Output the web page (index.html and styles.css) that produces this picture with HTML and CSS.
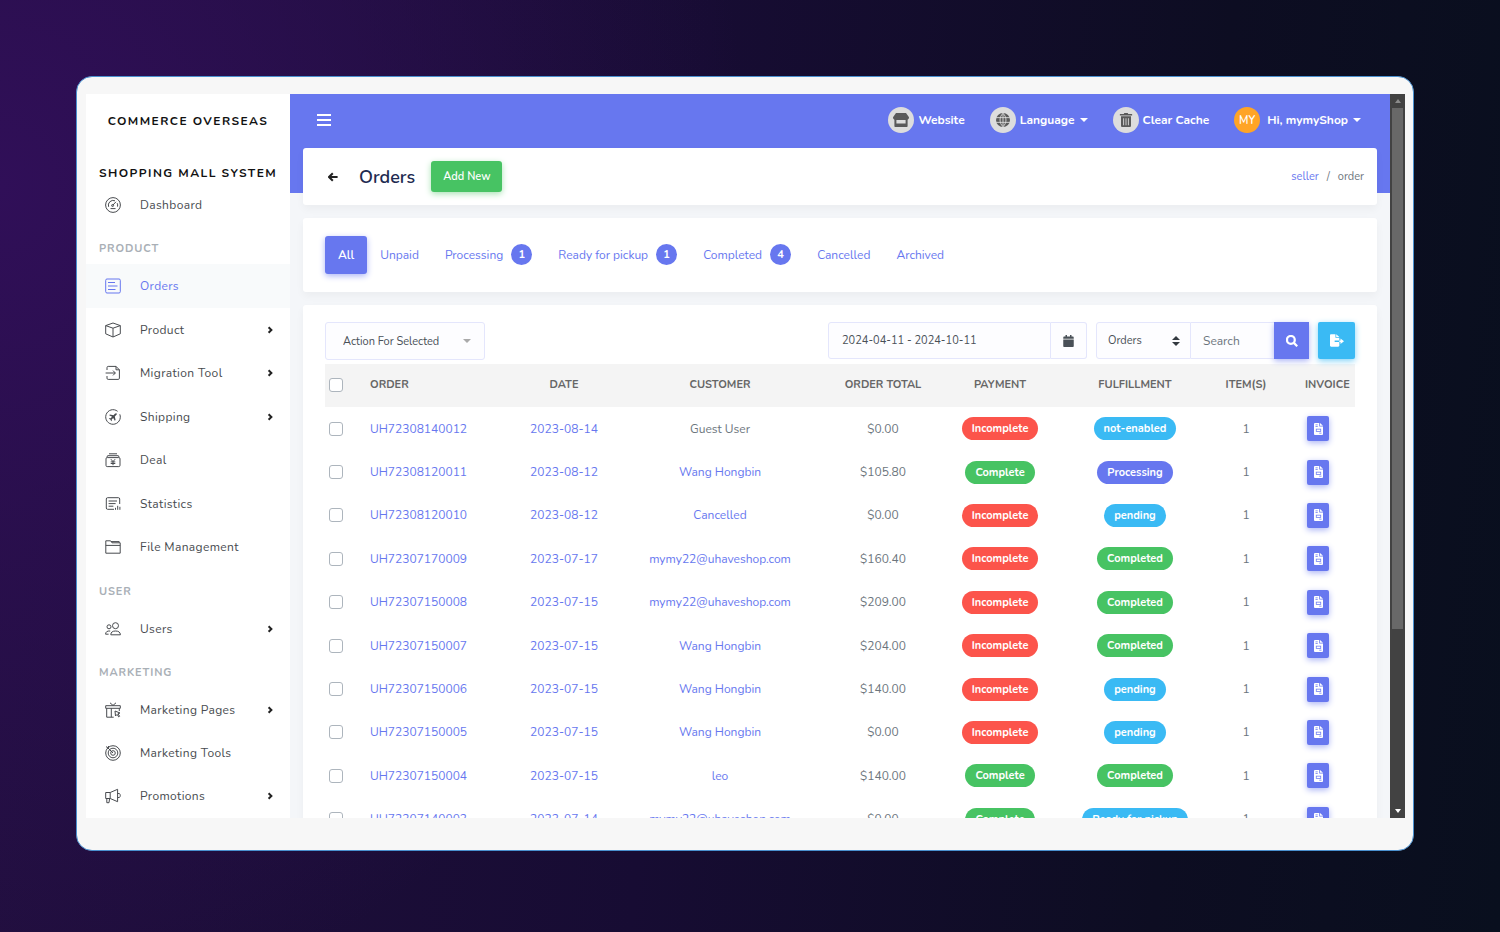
FILE: index.html
```html
<!DOCTYPE html>
<html lang="en">
<head>
    <meta charset="UTF-8">
    <meta name="viewport" content="width=device-width, initial-scale=1.0">
    <title>Orders</title>
    <link rel="stylesheet" href="styles.css">
</head>
<body>
    <!-- icon set -->
    <svg class="sprite" aria-hidden="true">
        <symbol id="i-dashboard" viewBox="0 0 16 16"><circle cx="8" cy="8" r="7.4"/><path d="M3.6 9.8A4.8 4.8 0 0 1 10 3.8M12.2 6.2a4.8 4.8 0 0 1 .3 3.4M7.6 8.4l3.4-3.6M5.5 11.6h5"/><circle cx="7.6" cy="8.5" r="1"/></symbol>
        <symbol id="i-orders" viewBox="0 0 16 16"><rect x=".7" y="1" width="14.6" height="14" rx="1.3"/><path d="M3 4.5h7M3 8h9.500M3 11.500h7.500"/></symbol>
        <symbol id="i-product" viewBox="0 0 16 16"><path d="M8 1l7.3 2.6v8.2L8 15 .7 11.8V3.6zM.7 3.6L8 6.2l7.3-2.6M8 6.2V15"/></symbol>
        <symbol id="i-migration" viewBox="0 0 16 16"><path d="M2 5V2.6C2 1.800 2.500 1.400 3.200 1.400H11l3.400 3.400v8.400c0 .8-.4 1.200-1.200 1.200H3.200c-.8 0-1.200-.4-1.200-1.200V11M11 1.400v3.400h3.400M.6 8h9.600M8 5.600L10.400 8 8 10.400"/></symbol>
        <symbol id="i-shipping" viewBox="0 0 16 16"><path d="M12.600 2.300A7.300 7.300 0 1 0 14.800 5.300"/><path class="solid" d="M11.600 4.400c.5.500.1 1.200-.4 1.700L9.800 7.500l.8 3.600-.8.700-1.600-2.900-1.500 1.500.1 1.300-.6.500-.8-1.600-1.600-.8.500-.6 1.300.1 1.500-1.500-2.900-1.600.7-.8 3.600.8 1.400-1.400c.5-.5 1.200-.9 1.700-.4z"/></symbol>
        <symbol id="i-deal" viewBox="0 0 16 16"><rect x="1" y="5.600" width="14" height="9" rx="1.200"/><path d="M2.600 3.700h10.800M4 1.800h8M1.800 5.400l.8-1.700M14.200 5.400l-.8-1.700M5.900 7.200L8 9.600l2.100-2.400M8 9.600v3.600M5.700 9.900h4.600M5.700 11.500h4.600"/></symbol>
        <symbol id="i-statistics" viewBox="0 0 16 16"><path d="M14.700 8V3c0-.9-.4-1.300-1.300-1.300H2.600c-.9 0-1.300.4-1.300 1.300v9c0 .9.4 1.300 1.300 1.300H9M3.600 5h8.400M3.600 7.600h7M3.600 10.200h4.800M10.500 13.800v-2M12.700 13.800v-4M14.900 13.800v-3"/></symbol>
        <symbol id="i-files" viewBox="0 0 16 16"><path d="M.8 14.200V1.800h4.800l1.400 2h8.200v10.400zM.8 6.400h14.400M6 2.600h8.200v1"/></symbol>
        <symbol id="i-users" viewBox="0 0 16 16"><circle cx="10.500" cy="4.700" r="3"/><circle cx="4" cy="5.800" r="2"/><path d="M5.800 13.800c0-2.800 2-3.800 4.700-3.800s4.900 1 4.900 3.800zM5.200 10C2.200 9.700.6 10.900.6 13.200h3"/></symbol>
        <symbol id="i-pages" viewBox="0 0 16 16"><path d="M.7 3.700h14.600v2.600H.7zM1.700 6.300v8.900h7M6.300 6.300v8.900M14.300 6.300V9M5 .8l3 2.600 3-2.600M10 9l5 2-2 .8 1.600 2.500-.9.600-1.600-2.500L10.500 14z"/></symbol>
        <symbol id="i-tools" viewBox="0 0 16 16"><circle cx="8" cy="8" r="7.300"/><circle cx="8" cy="8" r="4.800"/><circle cx="8" cy="8" r="2.300"/><path d="M8 8L3 3M1 1.600l2 1.400.6-2"/></symbol>
        <symbol id="i-promo" viewBox="0 0 16 16"><path d="M.7 4.500h4.500L12.600 1.300v12.400L5.200 10.500H.7zM5.200 4.500v6M1.800 10.500v4.200H4l.6-4.200M12.600 5.500h1.800c1.200 1.200 1.200 2.800 0 4h-1.800"/></symbol>
        <symbol id="i-chevron" viewBox="0 0 8 8"><path d="M2.600 1.200L5.400 4 2.600 6.800"/></symbol>
        <symbol id="i-store" viewBox="0 0 16 14"><path fill-rule="evenodd" d="M3 0h10l3 4.200c0 1.300-.6 2.100-1.400 2.500V13c0 .6-.4 1-1 1H2.400c-.6 0-1-.4-1-1V6.700C.6 6.300 0 5.500 0 4.200zM3.400 7v3.500h9.200V7z"/></symbol>
        <symbol id="i-globe" viewBox="0 0 16 16"><circle cx="8" cy="8" r="8"/><path class="grid" d="M0 5.300h16M0 10.700h16M8 0v16M8 .5C3.500 4 3.500 12 8 15.500M8 .5c4.500 3.500 4.500 11.500 0 15"/></symbol>
        <symbol id="i-trash" viewBox="0 0 14 16"><path fill-rule="evenodd" d="M4.500 1L5 0h4l.5 1H14v1.800H0V1zM1.300 3.800h11.400V14.500c0 .9-.6 1.500-1.500 1.500H2.800c-.9 0-1.500-.6-1.500-1.500zM3.800 6v8h1V6zM6.500 6v8h1V6zM9.200 6v8h1V6z"/></symbol>
        <symbol id="i-calendar" viewBox="0 0 14 16"><path d="M3 0h2v2h4V0h2v2h1.500c.9 0 1.500.6 1.500 1.500V5H0V3.500C0 2.600.6 2 1.500 2H3zM0 6h14v8.500c0 .9-.6 1.500-1.500 1.500h-11C.6 16 0 15.400 0 14.500z"/></symbol>
        <symbol id="i-search" viewBox="0 0 16 16"><path class="line" d="M10.500 10.500L15 15"/><circle class="line" cx="6.500" cy="6.500" r="5.200"/></symbol>
        <symbol id="i-export" viewBox="0 0 18 16"><path d="M0 1.500C0 .6.6 0 1.500 0H7v4.500h5V8H6v2h6v4.500c0 .9-.6 1.500-1.500 1.500h-9C.6 16 0 15.400 0 14.500zM8 0l4 3.500H8zM13.500 5.500l4.500 3.500-4.500 3.500V10H12V8h1.500z"/></symbol>
        <symbol id="i-invoice" viewBox="0 0 12 16"><path fill-rule="evenodd" d="M0 1.200C0 .5.500 0 1.200 0H7v4.500h5v10.300c0 .7-.5 1.200-1.200 1.200H1.200C.5 16 0 15.500 0 14.800zM8 0l4 3.500H8zM2 2v1h3V2zM2 4v1h3V4zM2.500 7.500v4h7v-4zM3.500 8.500h5v2h-5zM7 13v1h3v-1z"/></symbol>
        <symbol id="i-back" viewBox="0 0 10 10"><path d="M9.600 5H1M4.800 1.200L1 5l3.800 3.800"/></symbol>
    </svg>

    <div class="window">
        <div class="screen">
            <aside class="sidebar">
                <a class="brand" href="#">Commerce Overseas</a>
                <nav>
                    <h2 class="system-name">Shopping Mall System</h2>
                    <ul class="menu">
                        <li><a href="#"><svg class="menu-icon"><use href="#i-dashboard"/></svg>Dashboard</a></li>
                    </ul>
                    <h3 class="menu-header">Product</h3>
                    <ul class="menu menu-product">
                        <li class="active"><a href="#"><svg class="menu-icon"><use href="#i-orders"/></svg>Orders</a></li>
                        <li><a href="#"><svg class="menu-icon"><use href="#i-product"/></svg>Product<svg class="chevron"><use href="#i-chevron"/></svg></a></li>
                        <li><a href="#"><svg class="menu-icon"><use href="#i-migration"/></svg>Migration Tool<svg class="chevron"><use href="#i-chevron"/></svg></a></li>
                        <li><a href="#"><svg class="menu-icon"><use href="#i-shipping"/></svg>Shipping<svg class="chevron"><use href="#i-chevron"/></svg></a></li>
                        <li><a href="#"><svg class="menu-icon"><use href="#i-deal"/></svg>Deal</a></li>
                        <li><a href="#"><svg class="menu-icon"><use href="#i-statistics"/></svg>Statistics</a></li>
                        <li><a href="#"><svg class="menu-icon"><use href="#i-files"/></svg>File Management</a></li>
                    </ul>
                    <h3 class="menu-header">User</h3>
                    <ul class="menu">
                        <li><a href="#"><svg class="menu-icon"><use href="#i-users"/></svg>Users<svg class="chevron"><use href="#i-chevron"/></svg></a></li>
                    </ul>
                    <h3 class="menu-header">Marketing</h3>
                    <ul class="menu">
                        <li><a href="#"><svg class="menu-icon"><use href="#i-pages"/></svg>Marketing Pages<svg class="chevron"><use href="#i-chevron"/></svg></a></li>
                        <li><a href="#"><svg class="menu-icon"><use href="#i-tools"/></svg>Marketing Tools</a></li>
                        <li><a href="#"><svg class="menu-icon"><use href="#i-promo"/></svg>Promotions<svg class="chevron"><use href="#i-chevron"/></svg></a></li>
                    </ul>
                </nav>
            </aside>

            <main class="main">
                <header class="topbar">
                    <button class="hamburger" type="button" aria-label="Toggle menu"><span></span><span></span><span></span></button>
                    <a class="top-link" href="#"><span class="circle"><svg class="top-icon"><use href="#i-store"/></svg></span>Website</a>
                    <a class="top-link" href="#"><span class="circle"><svg class="top-icon"><use href="#i-globe"/></svg></span>Language<i class="caret"></i></a>
                    <a class="top-link" href="#"><span class="circle"><svg class="top-icon"><use href="#i-trash"/></svg></span>Clear Cache</a>
                    <a class="top-link" href="#"><span class="circle avatar">MY</span>Hi, mymyShop<i class="caret"></i></a>
                </header>

                <section class="card page-header">
                    <a class="back" href="#" aria-label="Back"><svg><use href="#i-back"/></svg></a>
                    <h1>Orders</h1>
                    <button class="btn-add" type="button">Add New</button>
                    <div class="breadcrumb"><a href="#">seller</a><span>/</span><span>order</span></div>
                </section>

                <section class="card tabs">
                    <a class="tab selected" href="#">All</a>
                    <a class="tab" href="#">Unpaid</a>
                    <a class="tab" href="#">Processing<span class="count">1</span></a>
                    <a class="tab" href="#">Ready for pickup<span class="count">1</span></a>
                    <a class="tab" href="#">Completed<span class="count">4</span></a>
                    <a class="tab" href="#">Cancelled</a>
                    <a class="tab" href="#">Archived</a>
                </section>

                <section class="card orders">
                    <form class="toolbar">
                        <select class="action" aria-label="Action for selected"><option>Action For Selected</option></select>
                        <div class="group">
                            <input class="range" type="text" value="2024-04-11 - 2024-10-11" aria-label="Date range">
                            <button class="calendar" type="button" aria-label="Open calendar"><svg><use href="#i-calendar"/></svg></button>
                        </div>
                        <div class="group">
                            <select class="scope" aria-label="Search in"><option>Orders</option></select>
                            <input class="search" type="text" placeholder="Search" aria-label="Search">
                            <button class="btn-search" type="button" aria-label="Search"><svg><use href="#i-search"/></svg></button>
                        </div>
                        <button class="btn-export" type="button" aria-label="Export"><svg><use href="#i-export"/></svg></button>
                    </form>

                    <table>
                        <thead>
                            <tr>
                                <th class="c-check"><input type="checkbox" aria-label="Select all"></th>
                                <th class="c-order">Order</th>
                                <th class="c-date">Date</th>
                                <th class="c-customer">Customer</th>
                                <th class="c-total">Order Total</th>
                                <th class="c-payment">Payment</th>
                                <th class="c-fulfillment">Fulfillment</th>
                                <th class="c-items">Item(s)</th>
                                <th class="c-invoice">Invoice</th>
                            </tr>
                        </thead>
                        <tbody>
                            <tr>
                                <td><input type="checkbox" aria-label="Select UH72308140012"></td>
                                <td class="c-order"><a href="#">UH72308140012</a></td>
                                <td><a href="#">2023-08-14</a></td>
                                <td>Guest User</td>
                                <td>$0.00</td>
                                <td><span class="badge danger">Incomplete</span></td>
                                <td><span class="badge info">not-enabled</span></td>
                                <td>1</td>
                                <td class="c-invoice"><button class="btn-invoice" type="button" aria-label="Invoice"><svg><use href="#i-invoice"/></svg></button></td>
                            </tr>
                            <tr>
                                <td><input type="checkbox" aria-label="Select UH72308120011"></td>
                                <td class="c-order"><a href="#">UH72308120011</a></td>
                                <td><a href="#">2023-08-12</a></td>
                                <td><a href="#">Wang Hongbin</a></td>
                                <td>$105.80</td>
                                <td><span class="badge success">Complete</span></td>
                                <td><span class="badge primary">Processing</span></td>
                                <td>1</td>
                                <td class="c-invoice"><button class="btn-invoice" type="button" aria-label="Invoice"><svg><use href="#i-invoice"/></svg></button></td>
                            </tr>
                            <tr>
                                <td><input type="checkbox" aria-label="Select UH72308120010"></td>
                                <td class="c-order"><a href="#">UH72308120010</a></td>
                                <td><a href="#">2023-08-12</a></td>
                                <td><a href="#">Cancelled</a></td>
                                <td>$0.00</td>
                                <td><span class="badge danger">Incomplete</span></td>
                                <td><span class="badge info">pending</span></td>
                                <td>1</td>
                                <td class="c-invoice"><button class="btn-invoice" type="button" aria-label="Invoice"><svg><use href="#i-invoice"/></svg></button></td>
                            </tr>
                            <tr>
                                <td><input type="checkbox" aria-label="Select UH72307170009"></td>
                                <td class="c-order"><a href="#">UH72307170009</a></td>
                                <td><a href="#">2023-07-17</a></td>
                                <td><a href="#">mymy22@uhaveshop.com</a></td>
                                <td>$160.40</td>
                                <td><span class="badge danger">Incomplete</span></td>
                                <td><span class="badge success">Completed</span></td>
                                <td>1</td>
                                <td class="c-invoice"><button class="btn-invoice" type="button" aria-label="Invoice"><svg><use href="#i-invoice"/></svg></button></td>
                            </tr>
                            <tr>
                                <td><input type="checkbox" aria-label="Select UH72307150008"></td>
                                <td class="c-order"><a href="#">UH72307150008</a></td>
                                <td><a href="#">2023-07-15</a></td>
                                <td><a href="#">mymy22@uhaveshop.com</a></td>
                                <td>$209.00</td>
                                <td><span class="badge danger">Incomplete</span></td>
                                <td><span class="badge success">Completed</span></td>
                                <td>1</td>
                                <td class="c-invoice"><button class="btn-invoice" type="button" aria-label="Invoice"><svg><use href="#i-invoice"/></svg></button></td>
                            </tr>
                            <tr>
                                <td><input type="checkbox" aria-label="Select UH72307150007"></td>
                                <td class="c-order"><a href="#">UH72307150007</a></td>
                                <td><a href="#">2023-07-15</a></td>
                                <td><a href="#">Wang Hongbin</a></td>
                                <td>$204.00</td>
                                <td><span class="badge danger">Incomplete</span></td>
                                <td><span class="badge success">Completed</span></td>
                                <td>1</td>
                                <td class="c-invoice"><button class="btn-invoice" type="button" aria-label="Invoice"><svg><use href="#i-invoice"/></svg></button></td>
                            </tr>
                            <tr>
                                <td><input type="checkbox" aria-label="Select UH72307150006"></td>
                                <td class="c-order"><a href="#">UH72307150006</a></td>
                                <td><a href="#">2023-07-15</a></td>
                                <td><a href="#">Wang Hongbin</a></td>
                                <td>$140.00</td>
                                <td><span class="badge danger">Incomplete</span></td>
                                <td><span class="badge info">pending</span></td>
                                <td>1</td>
                                <td class="c-invoice"><button class="btn-invoice" type="button" aria-label="Invoice"><svg><use href="#i-invoice"/></svg></button></td>
                            </tr>
                            <tr>
                                <td><input type="checkbox" aria-label="Select UH72307150005"></td>
                                <td class="c-order"><a href="#">UH72307150005</a></td>
                                <td><a href="#">2023-07-15</a></td>
                                <td><a href="#">Wang Hongbin</a></td>
                                <td>$0.00</td>
                                <td><span class="badge danger">Incomplete</span></td>
                                <td><span class="badge info">pending</span></td>
                                <td>1</td>
                                <td class="c-invoice"><button class="btn-invoice" type="button" aria-label="Invoice"><svg><use href="#i-invoice"/></svg></button></td>
                            </tr>
                            <tr>
                                <td><input type="checkbox" aria-label="Select UH72307150004"></td>
                                <td class="c-order"><a href="#">UH72307150004</a></td>
                                <td><a href="#">2023-07-15</a></td>
                                <td><a href="#">leo</a></td>
                                <td>$140.00</td>
                                <td><span class="badge success">Complete</span></td>
                                <td><span class="badge success">Completed</span></td>
                                <td>1</td>
                                <td class="c-invoice"><button class="btn-invoice" type="button" aria-label="Invoice"><svg><use href="#i-invoice"/></svg></button></td>
                            </tr>
                            <tr>
                                <td><input type="checkbox" aria-label="Select UH72307140003"></td>
                                <td class="c-order"><a href="#">UH72307140003</a></td>
                                <td><a href="#">2023-07-14</a></td>
                                <td><a href="#">mymy22@uhaveshop.com</a></td>
                                <td>$0.00</td>
                                <td><span class="badge success">Complete</span></td>
                                <td><span class="badge info">Ready for pickup</span></td>
                                <td>1</td>
                                <td class="c-invoice"><button class="btn-invoice" type="button" aria-label="Invoice"><svg><use href="#i-invoice"/></svg></button></td>
                            </tr>
                        </tbody>
                    </table>
                </section>
            </main>

            <div class="scrollbar">
                <span class="arrow up"></span>
                <span class="thumb"></span>
                <span class="arrow down"></span>
            </div>
        </div>
    </div>
</body>
</html>
```
FILE: styles.css
```css
* {
    box-sizing: border-box;
}
body {
    margin: 0;
    height: 100vh;
    padding: 76px 86px 81px 76px;
    font-family: Nunito, "Open Sans", sans-serif;
    font-size: 12px;
    color: #6c757d;
    background:
        radial-gradient(ellipse 50% 90% at 0% 20%, #300f58, rgba(48, 15, 88, 0)),
        linear-gradient(95deg, #210f3e 0%, #170c33 45%, #0d0d22 78%, #090f1e 100%);
}
a {
    color: #6777ef;
    text-decoration: none;
}
button,
input,
select {
    font-family: inherit;
    font-size: 11px;
}
button {
    padding: 0;
    border: none;
    cursor: pointer;
}
h1, h2, h3, ul {
    margin: 0;
    padding: 0;
}
svg {
    display: block;
    fill: currentColor;
}
.sprite {
    position: absolute;
    width: 0;
    height: 0;
}
.window {
    height: 100%;
    padding: 17px 8px 32px 9px;
    background: #f7f7f7;
    border: 1px solid #4a90cf;
    border-radius: 16px;
}
.screen {
    display: flex;
    height: 100%;
    overflow: hidden;
    background: #f4f6f9;
}

/* sidebar */
.sidebar {
    flex: 0 0 204px;
    background: #fff;
    box-shadow: 0 4px 8px rgba(0, 0, 0, 0.04);
}
.brand,
.system-name {
    font-size: 12px;
    font-weight: 700;
    letter-spacing: 0.12em;
    text-transform: uppercase;
    white-space: nowrap;
    color: #111;
}
.brand {
    display: block;
    line-height: 54px;
    text-align: center;
}
.system-name {
    padding: 15px 0 0 13px;
    line-height: 20px;
}
.menu {
    list-style: none;
}
.menu-product {
    display: flex;
    flex-direction: column;
    height: 305px;
}
.menu-product li {
    flex: 1;
}
.menu a {
    display: flex;
    align-items: center;
    height: 43px;
    padding: 0 16px 0 19px;
    letter-spacing: 0.03em;
    color: #484b4f;
}
.menu .active a {
    height: 44px;
    color: #6777ef;
    background: #f8fafb;
}
.menu-header {
    padding: 10px 13px 2px;
    font-size: 11px;
    line-height: 26px;
    font-weight: 700;
    letter-spacing: 0.08em;
    text-transform: uppercase;
    color: #a9afb6;
}
.menu-icon {
    width: 16px;
    height: 16px;
    margin-right: 19px;
    fill: none;
    stroke: currentColor;
}
.solid {
    fill: currentColor;
    stroke: none;
}
.chevron {
    width: 8px;
    height: 8px;
    margin-left: auto;
    fill: none;
    stroke: #222;
    stroke-width: 2;
}

/* main column */
.main {
    flex: 1;
    min-width: 0;
    display: flex;
    flex-direction: column;
    gap: 13px;
    padding: 0 13px;
    background: linear-gradient(#6777ef 99px, #f4f6f9 99px);
}
.topbar {
    display: flex;
    align-items: center;
    gap: 25px;
    height: 54px;
    margin-bottom: -13px;
    padding: 0 16px 2px 14px;
    flex-shrink: 0;
}
.hamburger {
    display: flex;
    flex-direction: column;
    gap: 3px;
    width: 14px;
    margin-right: auto;
    background: none;
}
.hamburger span {
    height: 2px;
    background: #fff;
}
.top-link {
    display: flex;
    align-items: center;
    gap: 4px;
    font-weight: 700;
    color: #fff;
}
.circle {
    display: flex;
    align-items: center;
    justify-content: center;
    width: 26px;
    height: 26px;
    border-radius: 50%;
    color: #5a5a5a;
    background: #ddd;
}
.avatar {
    margin-right: 3px;
    font-size: 11px;
    font-weight: 600;
    color: #fff;
    background: #ffa426;
}
.top-icon {
    width: 16px;
    height: 14px;
}
.grid {
    fill: none;
    stroke: #ddd;
    stroke-width: 1;
}
.caret {
    margin-left: 1px;
    border: 4px solid transparent;
    border-top-color: #fff;
    border-bottom: none;
}
.card {
    background: #fff;
    border-radius: 3px;
    box-shadow: 0 4px 8px rgba(0, 0, 0, 0.04);
    flex-shrink: 0;
}
.page-header {
    display: flex;
    align-items: center;
    height: 57px;
    padding: 0 13px 0 25px;
}
.back svg {
    width: 10px;
    height: 10px;
    fill: none;
    stroke: #222;
    stroke-width: 2;
}
h1 {
    margin: 0 16px 0 21px;
    font-size: 18px;
    font-weight: 600;
    color: #212a50;
}
.btn-add {
    height: 31px;
    padding: 0 12px;
    font-weight: 600;
    color: #fff;
    background: #47c363;
    border-radius: 3px;
    box-shadow: 0 2px 6px #a8e2b4;
}
.breadcrumb {
    display: flex;
    gap: 8px;
    margin-left: auto;
    font-size: 11px;
}
.tabs {
    display: flex;
    align-items: center;
    height: 74px;
    padding: 0 22px 1px;
}
.tab {
    display: flex;
    align-items: center;
    gap: 8px;
    height: 38px;
    padding: 0 13px;
}
.tab.selected {
    font-weight: 600;
    color: #fff;
    background: #6777ef;
    border-radius: 3px;
    box-shadow: 0 2px 6px #acb5f6;
}
.count {
    width: 21px;
    line-height: 21px;
    border-radius: 50%;
    text-align: center;
    font-size: 11px;
    font-weight: 700;
    color: #fff;
    background: #6777ef;
}

/* orders list */
.orders {
    padding: 17px 22px;
}
.toolbar {
    display: flex;
    gap: 9px;
    margin-bottom: 4px;
}
.action,
.scope,
.range,
.search,
.calendar {
    height: 37px;
    color: #495057;
    background-color: #fdfdff;
    border: 1px solid #e4e6fc;
    border-radius: 3px;
}
.action,
.scope {
    appearance: none;
    background-repeat: no-repeat;
}
.action {
    width: 160px;
    height: 38px;
    margin-right: auto;
    padding: 0 17px;
    background-image: url("data:image/svg+xml,%3Csvg xmlns='http://www.w3.org/2000/svg' width='8' height='4'%3E%3Cpath d='M0 0h8L4 4z' fill='%23aaa'/%3E%3C/svg%3E");
    background-position: right 13px center;
}
.group {
    display: flex;
}
.range {
    width: 223px;
    padding: 0 13px;
    border-radius: 3px 0 0 3px;
}
.calendar {
    display: flex;
    align-items: center;
    justify-content: center;
    width: 36px;
    border-left: none;
    border-radius: 0 3px 3px 0;
}
.calendar svg {
    width: 11px;
    height: 12px;
}
.scope {
    width: 95px;
    padding: 0 11px;
    border-radius: 3px 0 0 3px;
    background-image: url("data:image/svg+xml,%3Csvg xmlns='http://www.w3.org/2000/svg' width='8' height='10'%3E%3Cpath d='M0 4h8L4 0zM0 6h8l-4 4z' fill='%23343a40'/%3E%3C/svg%3E");
    background-position: right 10px center;
}
.search {
    width: 83px;
    padding: 0 12px;
    font-size: 12px;
    border-left: none;
    border-right: none;
    border-radius: 0;
}
.search::placeholder {
    color: #6c757d;
}
.btn-search,
.btn-export {
    display: flex;
    align-items: center;
    justify-content: center;
    width: 35px;
    height: 37px;
    color: #fff;
    background: #6777ef;
    box-shadow: 0 2px 6px #acb5f6;
}
.btn-search svg {
    width: 12px;
    height: 12px;
}
.line {
    fill: none;
    stroke: currentColor;
    stroke-width: 3;
}
.btn-export {
    width: 37px;
    border-radius: 2px;
    background: #3abaf4;
    box-shadow: 0 2px 6px #82d3f8;
}
.btn-export svg {
    width: 14px;
    height: 13px;
}
table {
    width: 100%;
    height: 477px;
    table-layout: fixed;
    border-collapse: collapse;
}
th,
td {
    padding: 0;
    text-align: center;
    white-space: nowrap;
}
th {
    height: 43px;
    padding-bottom: 2px;
    font-size: 11px;
    font-weight: 700;
    text-transform: uppercase;
    color: #666;
    background: #f4f4f4;
}
.c-check { width: 33px; }
.c-order { width: 150px; }
.c-date { width: 112px; }
.c-customer { width: 200px; }
.c-total { width: 126px; }
.c-payment { width: 108px; }
.c-fulfillment { width: 162px; }
.c-items { width: 60px; }
.c-invoice { width: 79px; }
th.c-order,
td.c-order {
    padding-left: 12px;
    text-align: left;
}
th.c-invoice {
    padding-left: 29px;
    text-align: left;
}
td.c-invoice {
    padding-left: 31px;
}
input[type="checkbox"] {
    appearance: none;
    display: block;
    width: 14px;
    height: 14px;
    margin: 0 0 0 4px;
    background: #fff;
    border: 1px solid #adb5bd;
    border-radius: 3px;
}
.badge {
    display: inline-block;
    padding: 0 10px;
    line-height: 23px;
    border-radius: 12px;
    font-size: 11px;
    font-weight: 700;
    color: #fff;
    vertical-align: middle;
}
.danger { background: #fc544b; }
.success { background: #47c363; }
.info { background: #3abaf4; }
.primary { background: #6777ef; }
.btn-invoice {
    display: flex;
    align-items: center;
    justify-content: center;
    width: 22px;
    height: 25px;
    color: #fff;
    background: #6777ef;
    border-radius: 2px;
    box-shadow: 0 2px 6px #acb5f6;
}
.btn-invoice svg {
    width: 9px;
    height: 12px;
}

/* scrollbar */
.scrollbar {
    display: flex;
    flex-direction: column;
    align-items: center;
    flex: 0 0 15px;
    background: #424242;
}
.thumb {
    flex: 0 0 72%;
    width: 11px;
    margin: 5px 0 auto;
    background: #686868;
}
.arrow {
    border: 3px solid transparent;
}
.up {
    margin-top: 2px;
    border-bottom: 4px solid #8b8b8b;
}
.down {
    margin-bottom: 2px;
    border-top: 4px solid #fff;
}
```
